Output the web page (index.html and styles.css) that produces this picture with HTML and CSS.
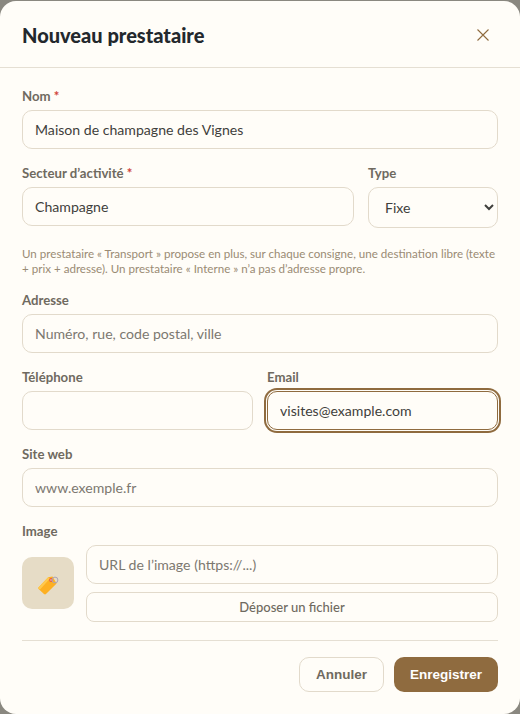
FILE: index.html
```html
<!DOCTYPE html>
<html lang="fr">
<head>
    <meta charset="UTF-8">
    <meta name="viewport" content="width=device-width, initial-scale=1.0">
    <title>Nouveau prestataire</title>
    <link rel="stylesheet" href="styles.css">
</head>
<body>

<div class="modal">
    <header class="modal-header">
        <h2>Nouveau prestataire</h2>
        <button class="close-button" type="button" aria-label="Fermer">
            <svg width="14" height="14" viewBox="0 0 14 14" fill="none" stroke="#8f6b3f" stroke-width="1.1">
                <path d="M1.5 1.5 12.5 12.5M12.5 1.5 1.5 12.5"/>
            </svg>
        </button>
    </header>

    <form class="modal-body">
        <div class="field">
            <label>Nom <span class="required">*</span></label>
            <input type="text" value="Maison de champagne des Vignes">
        </div>

        <div class="row row-type">
            <div class="field">
                <label>Secteur d’activité <span class="required">*</span></label>
                <input type="text" value="Champagne">
            </div>
            <div class="field">
                <label>Type</label>
                <select>
                    <option>Fixe</option>
                    <option>Transport</option>
                    <option>Interne</option>
                </select>
            </div>
        </div>

        <p class="hint">Un prestataire « Transport » propose en plus, sur chaque consigne, une destination libre (texte + prix + adresse). Un prestataire « Interne » n’a pas d’adresse propre.</p>

        <div class="field">
            <label>Adresse</label>
            <input type="text" placeholder="Numéro, rue, code postal, ville">
        </div>

        <div class="row">
            <div class="field">
                <label>Téléphone</label>
                <input type="text">
            </div>
            <div class="field">
                <label>Email</label>
                <input class="is-focused" type="text" value="visites@example.com">
            </div>
        </div>

        <div class="field">
            <label>Site web</label>
            <input type="text" placeholder="www.exemple.fr">
        </div>

        <div class="field">
            <label>Image</label>
            <div class="image-row">
                <div class="thumb">
                    <svg width="24" height="24" viewBox="0 0 24 24">
                        <path d="M2.6 16.2 12.2 6.2 16.5 5.4 20.6 12.6 10 23Q9 23.8 8 23L2.6 18Q1.8 17 2.6 16.2Z" fill="#fdb022"/>
                        <path d="M2.6 16.2 12.2 6.2 14 7.6 4 18.6 2.6 18Q1.8 17 2.6 16.2Z" fill="#ffc94d"/>
                        <circle cx="15" cy="9" r="1.9" fill="#ea5a47"/>
                        <circle cx="15" cy="9" r=".7" fill="#fbe6c8"/>
                        <circle cx="19" cy="9" r="2.9" fill="none" stroke="#aaa3b8" stroke-width="1"/>
                    </svg>
                </div>
                <div class="image-inputs">
                    <input type="text" placeholder="URL de l’image (https://...)">
                    <button class="upload-button" type="button">Déposer un fichier</button>
                </div>
            </div>
        </div>

        <footer class="modal-footer">
            <button class="button button-cancel" type="button">Annuler</button>
            <button class="button button-save" type="button">Enregistrer</button>
        </footer>
    </form>
</div>

</body>
</html>
```

FILE: styles.css
```css
* {
    margin: 0;
    padding: 0;
    box-sizing: border-box;
}
body {
    font-family: 'Lato', sans-serif;
    background: #8a8880;
    color: #2b2b2b;
    overflow: hidden;
    padding-top: 1px;
}
.modal {
    background: #fffdf8;
    border-radius: 16px;
    height: 713px;
    overflow: hidden;
}
.modal-header {
    display: flex;
    justify-content: space-between;
    align-items: center;
    height: 67px;
    padding: 1px 30px 0 22px;
    border-bottom: 1px solid #e5dfd3;
}
.modal-header h2 {
    font-size: 20px;
    font-weight: 900;
    color: #23282d;
}
.close-button {
    display: flex;
    background: none;
    border: none;
}
.modal-body {
    display: flex;
    flex-direction: column;
    gap: 14px;
    padding: 18px 22px 22px;
}
.row {
    display: grid;
    grid-template-columns: 1fr 1fr;
    gap: 14px;
}
.row-type {
    grid-template-columns: 1fr 130px;
}
.field label {
    display: block;
    height: 24px;
    font-size: 13.2px;
    font-weight: 700;
    line-height: 21px;
    color: #6f6a60;
}
.required {
    color: #d0433a;
}
input, select {
    display: block;
    width: 100%;
    height: 39px;
    padding: 0 12px;
    font-family: inherit;
    font-size: 14.1px;
    color: #3f3f3c;
    background: #fffdf8;
    border: 1px solid #e2dacb;
    border-radius: 10px;
    outline: none;
}
input::placeholder {
    color: #7c7870;
}
select {
    height: 41px;
}
input.is-focused {
    border-color: #8f6b3f;
    box-shadow: 0 0 0 1px #fffdf8, 0 0 0 3px #8f6b3f;
}
.hint {
    margin-top: 4px;
    font-size: 11.6px;
    line-height: 15px;
    color: #9a8b74;
}
.image-row {
    display: flex;
    align-items: center;
    gap: 12px;
}
.thumb {
    display: flex;
    justify-content: center;
    align-items: center;
    flex: none;
    width: 52px;
    height: 52px;
    margin-top: -1px;
    background: #e6dcc6;
    border-radius: 10px;
}
.image-inputs {
    display: flex;
    flex-direction: column;
    gap: 8px;
    flex: 1;
}
.upload-button {
    height: 30px;
    font-family: inherit;
    font-size: 13px;
    font-weight: 500;
    color: #6f6a60;
    background: #fffdf8;
    border: 1px solid #e2dacb;
    border-radius: 8px;
}
.modal-footer {
    display: flex;
    justify-content: flex-end;
    gap: 10px;
    margin-top: 4px;
    padding-top: 16px;
    border-top: 1px solid #e5dfd3;
}
.button {
    height: 35px;
    padding: 0 16px;
    font-family: 'Liberation Sans', sans-serif;
    font-size: 13.5px;
    font-weight: 700;
    border-radius: 10px;
}
.button-cancel {
    color: #6f6a60;
    background: #fffdf8;
    border: 1px solid #e2dacb;
}
.button-save {
    color: #fff;
    background: #8f6b3f;
    border: none;
}
```
